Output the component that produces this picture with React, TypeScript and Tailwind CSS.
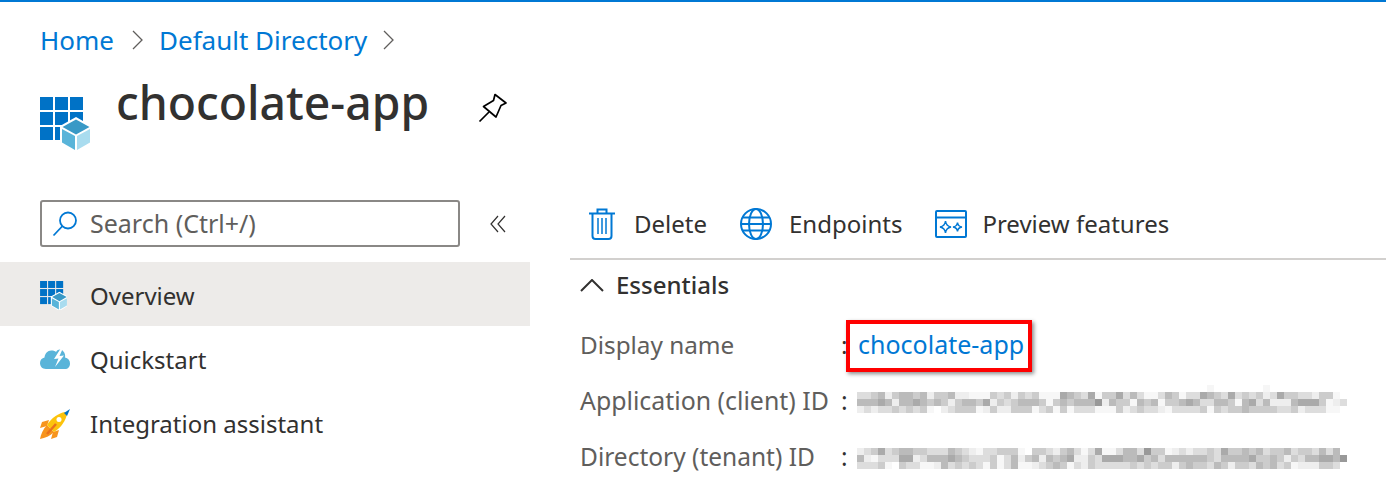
const FONT = "font-['Noto_Sans','Open_Sans',sans-serif]";

// pixelated ids, one hex digit per 7px cell, "." is white
const clientId = [
  "..................................................e.......e.................e.........",
  "ddcbecbbcbeccbeefffcdcecdcfffabcdafccadbdffdbcfddabcdadcdcedaccddeccf",
  "bbbabebbabcbcecbbcaecdcbbbcfcbcbbb9ebccfbcbfccbabddbbcfbadbeeebaaacfed",
  "ededdcdcdcf.edcccfeceecccfdcfcfdddfffcedcddefddddcfcdccbccccddcedddff",
];
const tenantId = [
  ".......................................................................e..e.........",
  "edcadcbbccdddbcdefddcccf.ccdecbdfdaffdbbd9ccfededdcdaccbcbdccbdccdbdb",
  "befdddaaedbbbabcdddcfdbecbebcbaeecdaaabbacbdbbbbbbcdbbbbaccbcecdbbaab9",
  "dddcf.cddffebdcdcdfcfdbffedcbcfdecdddddcdcdccecbccdbceccdbcbdcfeeeccd",
];

function Mosaic({ rows }: { rows: string[] }) {
  return (
    <svg width="490" height="28" shapeRendering="crispEdges" className="block -mt-[4px]">
      {rows.map((row, y) =>
        row.split("").slice(0, 70).map((c, x) =>
          c === "." ? null : (
            <rect
              key={`${x}-${y}`}
              x={x * 7}
              y={y * 7}
              width="7"
              height="7"
              fill={y === 0 ? "#f6f6f6" : c === "f" ? "#f7f7f7" : `#${c}${c}${c}${c}${c}${c}`}
            />
          )
        )
      )}
    </svg>
  );
}

function AppIcon({ className }: { className: string }) {
  const cells = [0, 15, 30];
  return (
    <svg viewBox="0 0 50 54" className={className}>
      {cells.map((y) =>
        cells.map((x) => <rect key={`${x}-${y}`} x={x} y={y} width="13" height="13" fill="#0072c6" />)
      )}
      <path d="M36 20 L52 29 L52 46 L36 56 L20 46 L20 29 Z" fill="#fff" />
      <path d="M36 22.5 L49.5 30 L36 37.5 L22.5 30 Z" fill="#3999c6" />
      <path d="M22 32 L35 39 L35 53 L22 45.5 Z" fill="#59b4d9" />
      <path d="M50 32 L37 39 L37 53 L50 45.5 Z" fill="#a9dcef" />
    </svg>
  );
}

function CloudIcon() {
  return (
    <svg viewBox="0 0 30 21" className="w-[30px] h-[21px] -mt-[2px]">
      <path d="M6 21 C2 21 0 18 0 15 C0 12 2 10 4.5 9.5 C5 5 8 2 12 2.5 C13.5 2.5 15 3 16 4 C18 1 21 1 23 3 C25 5 25.5 7.5 25 9.5 C28 10 30 12 30 15.5 C30 19 28 21 25 21 Z" fill="#59b4d9" />
      <path d="M21 0 L14 11 L18.5 10.5 L15 19 L24 7.5 L19.5 8 L23 0 Z" fill="#fff" />
    </svg>
  );
}

function RocketIcon() {
  return (
    <svg viewBox="0 0 30 30" className="w-[30px] h-[30px]">
      <path d="M9 11 L2 13 L0 19 L7 17 Z" fill="#f7941d" />
      <path d="M19 21 L17 28 L11 30 L13 23 Z" fill="#f7941d" />
      <path d="M7 16 C3 20 1 25 0 30 C5 29 10 27 14 23 Z" fill="#f7941d" />
      <path d="M7 16 C11 9 19 4 25 3 L27 5 C26 11 21 19 14 23 Z" fill="#fcc30c" />
      <path d="M7 25 L16 15" stroke="#e8711d" strokeWidth="2.5" />
      <path d="M24 4 L30 0 L27 7 Z" fill="#0072c6" />
      <circle cx="19" cy="10.5" r="2.5" fill="#fff" />
    </svg>
  );
}

function SearchIcon() {
  return (
    <svg viewBox="0 0 26 26" fill="none" stroke="#0078d4" strokeWidth="1.8" className="w-[26px] h-[26px]">
      <circle cx="16" cy="9.5" r="8" />
      <path d="M10.5 15 L1.5 24.5" />
    </svg>
  );
}

function TrashIcon() {
  return (
    <svg viewBox="0 0 26 32" fill="none" stroke="#0078d4" strokeWidth="2" className="w-[26px] h-[32px]">
      <path d="M0 5.5 H26 M3.5 5.5 V28 Q3.5 31 6.5 31 H19.5 Q22.5 31 22.5 28 V5.5 M8.5 5.5 V1.5 H17.5 V5.5" />
      <path d="M9 10 V26 M13 10 V26 M17 10 V26" strokeWidth="1.5" />
    </svg>
  );
}

function GlobeIcon() {
  return (
    <svg viewBox="0 0 32 32" fill="none" stroke="#0078d4" strokeWidth="2" className="w-[32px] h-[32px]">
      <circle cx="16" cy="16" r="15" />
      <ellipse cx="16" cy="16" rx="7" ry="15" />
      <path d="M3 9.5 H29 M3 22.5 H29 M1 16 H31" />
    </svg>
  );
}

function PreviewIcon() {
  return (
    <svg viewBox="0 0 32 28" fill="none" stroke="#0078d4" strokeWidth="2" className="w-[32px] h-[28px]">
      <rect x="1" y="1" width="30" height="26" rx="1" />
      <path d="M1 7.5 H31" />
      <path d="M10.5 11 Q11 16 16 17 Q11 18 10.5 23 Q10 18 5 17 Q10 16 10.5 11 Z" strokeWidth="1.5" />
      <path d="M22.5 12.5 Q23 16.5 27 17 Q23 17.5 22.5 21.5 Q22 17.5 18 17 Q22 16.5 22.5 12.5 Z" strokeWidth="1.5" />
    </svg>
  );
}

function PinIcon() {
  return (
    <svg viewBox="0 0 30 30" fill="none" stroke="#000" strokeWidth="1.7" className="w-[30px] h-[30px]">
      <path d="M17 1.5 L28 10 L23 12.5 L18 24 L5.5 13.5 L15.5 7.5 Z" strokeLinejoin="round" />
      <path d="M11 19 L1.5 28.5" />
    </svg>
  );
}

function CrumbChevron({ className }: { className: string }) {
  return (
    <svg viewBox="0 0 11 20" fill="none" stroke="#605e5c" strokeWidth="1.3" className={`w-[11px] h-[20px] ${className}`}>
      <path d="M1 1 L10 10 L1 19" />
    </svg>
  );
}

export default function App() {
  const navItems = [
    { label: "Overview", icon: <AppIcon className="w-[27px] h-[29px]" />, active: true },
    { label: "Quickstart", icon: <CloudIcon /> },
    { label: "Integration assistant", icon: <RocketIcon /> },
  ];

  return (
    <div className={`${FONT} w-[1386px] h-[488px] overflow-hidden bg-white text-[#323130]`}>
      <div className="h-[2px] bg-[#0078d4]" />

      {/* Breadcrumb */}
      <div className="flex items-center h-[38px] mt-[19px] pl-[40px] text-[26px] text-[#0078d4]">
        <span>Home</span>
        <CrumbChevron className="ml-[18px] mr-[16px]" />
        <span>Default Directory</span>
        <CrumbChevron className="ml-[16px]" />
      </div>

      {/* Title */}
      <div className="flex items-start h-[134px] pl-[40px]">
        <AppIcon className="w-[50px] h-[54px] mt-[38px]" />
        <h1 className="ml-[26px] mt-[4px] w-[362px] text-[46.3px] leading-[80px] font-medium">chocolate-app</h1>
        <div className="mt-[34px]">
          <PinIcon />
        </div>
      </div>

      <div className="flex">
        {/* Left menu */}
        <div className="w-[530px]">
          <div className="flex items-start h-[69px] pl-[40px] pt-[7px]">
            <div className="flex items-center w-[420px] h-[47px] border-2 border-[#8a8886] rounded-[3px] pl-[10px] text-[25px] text-[#605e5c]">
              <SearchIcon />
              <span className="ml-[12px]">Search (Ctrl+/)</span>
            </div>
            <svg viewBox="0 0 16 18" fill="none" stroke="#323130" strokeWidth="1.2" className="w-[16px] h-[18px] ml-[30px] mt-[15px]">
              <path d="M8 1 L1 9 L8 17 M15 1 L8 9 L15 17" />
            </svg>
          </div>
          {navItems.map((item) => (
            <div
              key={item.label}
              className={`flex items-center h-[64px] pl-[40px] pt-[3px] text-[24px] ${item.active ? "bg-[#edebe9]" : ""}`}
            >
              <div className="w-[50px] flex items-center">{item.icon}</div>
              <span>{item.label}</span>
            </div>
          ))}
        </div>

        {/* Main */}
        <div className="ml-[40px] flex-1">
          <div className="flex items-center h-[67px] border-b-2 border-[#d2d0ce] pb-[3px] pl-[19px] text-[24px]">
            <TrashIcon />
            <span className="ml-[19px]">Delete</span>
            <div className="ml-[33px]">
              <GlobeIcon />
            </div>
            <span className="ml-[17px]">Endpoints</span>
            <div className="ml-[33px]">
              <PreviewIcon />
            </div>
            <span className="ml-[15px]">Preview features</span>
          </div>

          <div className="flex items-center h-[48px] pl-[10px] pt-[2px] text-[24px] font-medium">
            <svg viewBox="0 0 24 13" fill="none" stroke="#323130" strokeWidth="2" className="w-[24px] h-[13px]">
              <path d="M1 12 L12 1 L23 12" />
            </svg>
            <span className="ml-[12px]">Essentials</span>
          </div>

          <div className="pl-[10px] mt-[9px] text-[#605e5c]">
            <div className="flex items-center h-[56px] text-[24.3px]">
              <span className="w-[261px]">Display name</span>
              <span className="w-[16px] text-[#323130]">:</span>
              <span className="relative ml-[1px] text-[25px] text-[#0078d4]">
                chocolate-app
                <span className="absolute left-[-12px] right-[-8px] top-[-6px] bottom-[-8px] border-4 border-[#ff0000] shadow-[2px_2px_4px_rgba(0,0,0,0.45)]" />
              </span>
            </div>
            <div className="flex items-center h-[56px] text-[24.9px]">
              <span className="w-[261px]">Application (client) ID</span>
              <span className="w-[16px] text-[#323130]">:</span>
              <Mosaic rows={clientId} />
            </div>
            <div className="flex items-center h-[56px] text-[24.5px]">
              <span className="w-[261px]">Directory (tenant) ID</span>
              <span className="w-[16px] text-[#323130]">:</span>
              <Mosaic rows={tenantId} />
            </div>
          </div>
        </div>
      </div>
    </div>
  );
}
